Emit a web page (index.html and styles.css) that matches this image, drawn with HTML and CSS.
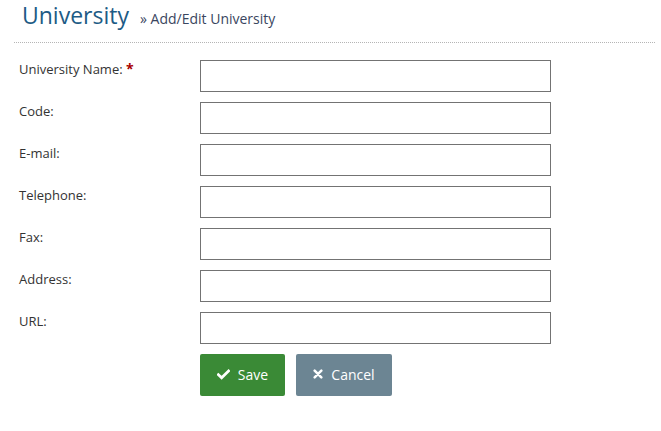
FILE: index.html
```html
<!DOCTYPE html>
<html>
<head>
<meta charset="utf-8">
<link rel="stylesheet" href="styles.css">
</head>
<body>
<div class="page">
  <div class="page-header">
    <h1 class="title">University</h1>
    <span class="subtitle">&raquo; Add/Edit University</span>
  </div>
  <div class="divider"></div>
  <form class="form">
    <div class="row"><label class="label">University Name: <span class="req">*</span></label><input class="field" type="text"></div>
    <div class="row"><label class="label">Code:</label><input class="field" type="text"></div>
    <div class="row"><label class="label">E-mail:</label><input class="field" type="text"></div>
    <div class="row"><label class="label">Telephone:</label><input class="field" type="text"></div>
    <div class="row"><label class="label">Fax:</label><input class="field" type="text"></div>
    <div class="row"><label class="label">Address:</label><input class="field" type="text"></div>
    <div class="row"><label class="label">URL:</label><input class="field" type="text"></div>
    <div class="actions">
      <button type="button" class="btn btn-save"><svg class="ico" viewBox="0 0 14 14" width="13" height="13"><path d="M1.5 7.2 L5 10.6 L12.5 3.2" fill="none" stroke="#fff" stroke-width="3" stroke-linecap="square"/></svg>Save</button>
      <button type="button" class="btn btn-cancel"><svg class="ico" viewBox="0 0 12 12" width="10" height="10"><path d="M2 2 L10 10 M10 2 L2 10" fill="none" stroke="#fff" stroke-width="3" stroke-linecap="round"/></svg>Cancel</button>
    </div>
  </form>
</div>
</body>
</html>
```
FILE: styles.css
```css
* { box-sizing: border-box; }
html, body { margin: 0; padding: 0; background: #fff; }
body { font-family: "Open Sans", "Liberation Sans", sans-serif; color: #333; }
.page { padding: 0 6px 0 14px; }
.page-header { display: flex; align-items: baseline; padding-left: 8px; height: 42px; }
.title { margin: 0; font-size: 23px; font-weight: 400; color: #1d5b85; line-height: 30px; }
.subtitle { margin-left: 11px; font-size: 14px; color: #3a4660; }
.divider { border-top: 1px dotted #b5b5b5; height: 0; }
.form { padding-top: 17px; padding-left: 5px; display: flex; flex-direction: column; gap: 10px; }
.row { display: flex; align-items: flex-start; height: 32px; }
.label { width: 181px; font-size: 13px; padding-top: 0; color: #333; line-height: 18px; }
.req { color: #a80000; font-weight: 700; font-size: 14px; }
.field { width: 351px; height: 32px; border: 1px solid #737373; border-radius: 0; padding: 4px 8px; font: inherit; font-size: 13px; margin: 0; outline: none; }
.actions { display: flex; gap: 11px; padding-left: 181px; }
.btn { display: flex; align-items: center; justify-content: center; gap: 8px; height: 42px; border: 0; border-radius: 2px; color: #fff; font-family: "Open Sans", "Liberation Sans", sans-serif; font-size: 14px; padding: 0 0 2px; cursor: pointer; }
.btn-save { width: 85px; background: #3a8a36; }
.btn-cancel { width: 96px; background: #6c8593; }
.ico { display: block; }
```
